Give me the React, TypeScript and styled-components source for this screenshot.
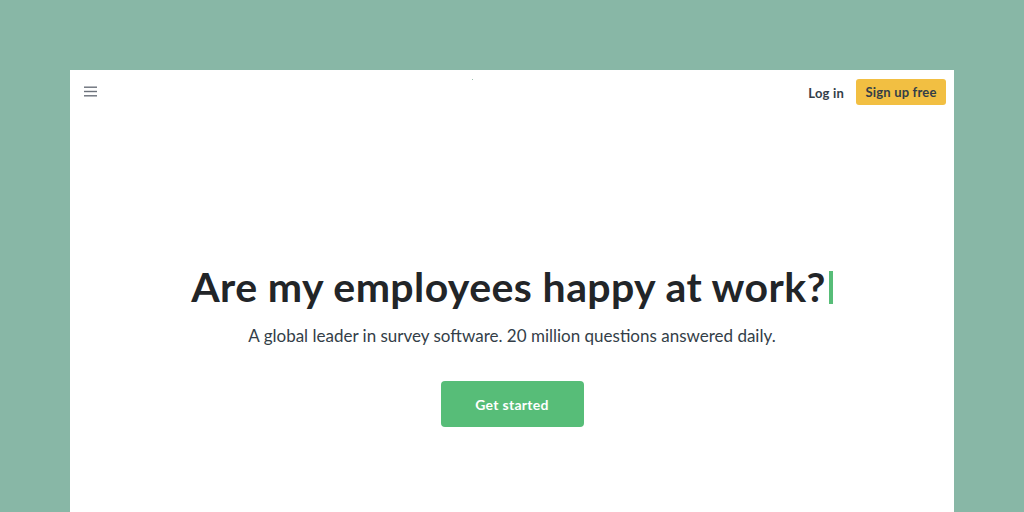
import React from 'react';
import styled, { createGlobalStyle } from 'styled-components';

const GlobalStyle = createGlobalStyle`
  html, body {
    margin: 0;
    padding: 0;
    background: #88b7a6;
  }
  body {
    font-family: Lato, "Liberation Sans", sans-serif;
    color: #333e48;
  }
`;

const Stage = styled.div`
  height: 512px;
  padding: 70px 70px 0;
  box-sizing: border-box;
  overflow: hidden;
`;

const Panel = styled.div`
  background: #ffffff;
  height: 442px;
  display: flex;
  flex-direction: column;
`;

const Header = styled.header`
  display: flex;
  align-items: center;
  justify-content: space-between;
  height: 43px;
  padding: 0 8px 0 14px;
  position: relative;
`;

const MenuButton = styled.button`
  border: 0;
  background: none;
  padding: 0;
  width: 14px;
  height: 14px;
  display: flex;
  align-items: center;
  color: #6b717a;
  cursor: pointer;
`;

const LogoDot = styled.span`
  position: absolute;
  left: 402px;
  top: 9px;
  width: 1px;
  height: 1px;
  background: #9bbfae;
`;

const Actions = styled.div`
  display: flex;
  align-items: center;
  gap: 12px;
`;

const LoginLink = styled.a`
  font-size: 13px;
  font-weight: 700;
  letter-spacing: 0.2px;
  color: #333e48;
  text-decoration: none;
  margin-top: 2px;
`;

const SignupButton = styled.a`
  display: inline-flex;
  align-items: center;
  justify-content: center;
  width: 90px;
  height: 26px;
  border-radius: 3px;
  background: #f2bf42;
  color: #333e48;
  font-size: 13px;
  font-weight: 700;
  letter-spacing: 0.2px;
  text-decoration: none;
`;

const Hero = styled.main`
  flex: 1;
  display: flex;
  flex-direction: column;
  align-items: center;
  padding-top: 150px;
`;

const Headline = styled.h1`
  margin: 0;
  font-size: 41px;
  line-height: 48px;
  font-weight: 700;
  letter-spacing: 0.4px;
  color: #222528;
  display: flex;
  align-items: center;
`;

const Cursor = styled.span`
  display: inline-block;
  width: 4px;
  height: 33px;
  margin-left: 3px;
  background: #57bd78;
`;

const Subtitle = styled.p`
  margin: 13px 0 0;
  font-size: 17px;
  line-height: 24px;
  color: #333e48;
`;

const CtaButton = styled.a`
  display: flex;
  align-items: center;
  justify-content: center;
  margin-top: 33px;
  width: 143px;
  height: 46px;
  border-radius: 4px;
  background: #57bd78;
  color: #ffffff;
  font-size: 14px;
  font-weight: 700;
  letter-spacing: 0.3px;
  text-decoration: none;
`;

const App: React.FC = () => (
  <>
    <GlobalStyle />
    <Stage>
      <Panel>
        <Header>
          <MenuButton aria-label="Menu">
            <svg width="13" height="11" viewBox="0 0 13 11">
              <rect x="0" y="0.5" width="13" height="1.4" fill="currentColor" />
              <rect x="0" y="4.8" width="13" height="1.4" fill="currentColor" />
              <rect x="0" y="9.1" width="13" height="1.4" fill="currentColor" />
            </svg>
          </MenuButton>
          <LogoDot />
          <Actions>
            <LoginLink href="#">Log in</LoginLink>
            <SignupButton href="#">Sign up free</SignupButton>
          </Actions>
        </Header>
        <Hero>
          <Headline>
            Are my employees happy at work?
            <Cursor />
          </Headline>
          <Subtitle>A global leader in survey software. 20 million questions answered daily.</Subtitle>
          <CtaButton href="#">Get started</CtaButton>
        </Hero>
      </Panel>
    </Stage>
  </>
);

export default App;
